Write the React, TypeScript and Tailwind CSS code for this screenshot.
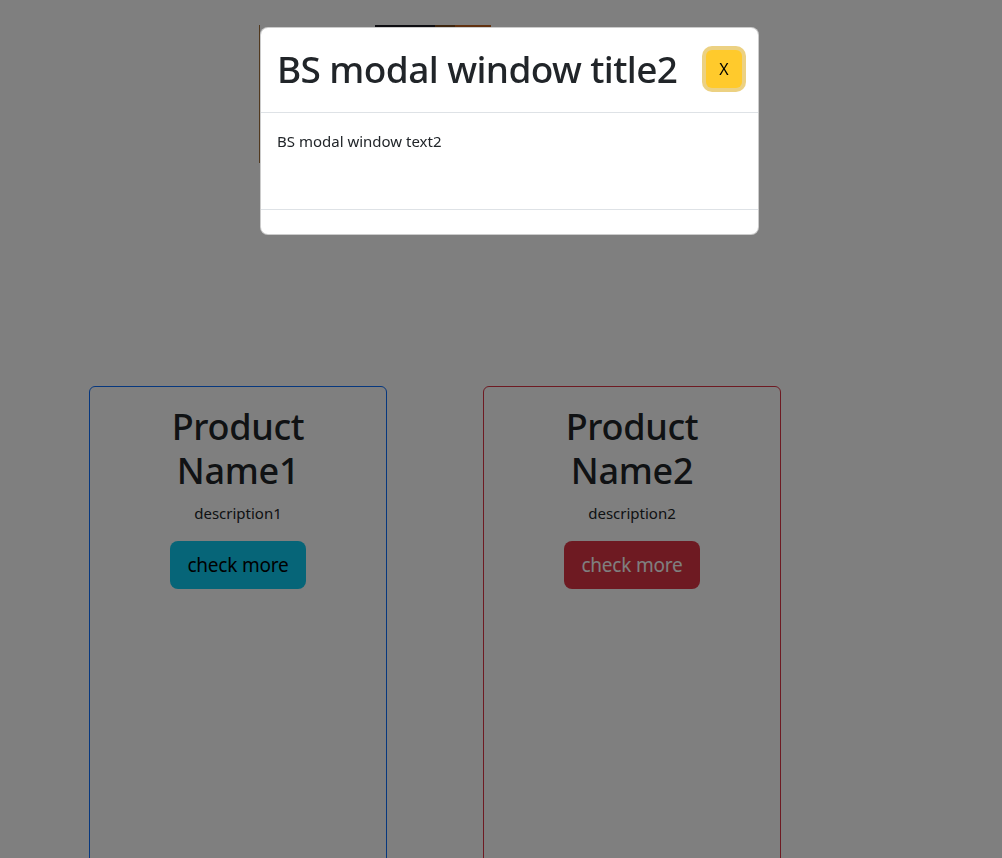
export default function App() {
  const font = { fontFamily: '"Noto Sans", "Open Sans", sans-serif' }
  return (
    <div className="relative min-h-[858px] bg-white text-[#212529]" style={font}>
      {/* page content behind the backdrop */}
      <div className="flex h-[386px] flex-col">
        <div className="ml-[259px] mt-[25px] flex h-[138px] w-[232px]">
          <div className="w-[116px] border-l border-[#a0703c] bg-white" />
          <div className="w-[60px] bg-[#1b1b22]" />
          <div className="w-[20px] bg-[#7a4a1c]" />
          <div className="flex-1 bg-[#c2621f]" />
        </div>
      </div>
      <div className="flex gap-[96px] pl-[89px]">
        <ProductCard name="Name1" description="description1" border="border-[#0d6efd]" button="bg-[#0dcaf0] text-black" />
        <ProductCard name="Name2" description="description2" border="border-[#dc3545]" button="bg-[#dc3545] text-white" />
      </div>

      {/* backdrop + modal */}
      <div className="fixed inset-0 bg-black/50">
        <div className="ml-[260px] mt-[27px] w-[499px] rounded-lg border border-black/20 bg-white">
          <div className="flex items-center justify-between border-b border-[#dee2e6] px-4 pt-[15px] pb-[17px]">
            <h1 className="text-[37px] leading-[52px] font-medium tracking-[-0.6px]">BS modal window title2</h1>
            <button className="h-[38px] w-[36px] rounded-md bg-[#ffca2c] text-base text-black shadow-[0_0_0_4px_rgba(217,164,6,0.5)]">
              X
            </button>
          </div>
          <div className="h-[96px] p-4">
            <p className="text-[15px] leading-6">BS modal window text2</p>
          </div>
          <div className="h-[25px] border-t border-[#dee2e6]" />
        </div>
      </div>
    </div>
  )
}

function ProductCard({ name, description, border, button }: { name: string; description: string; border: string; button: string }) {
  return (
    <div className={`h-[520px] w-[298px] rounded-md border ${border} p-4 text-center`}>
      <h1 className="mb-2 pt-[2px] text-[36px] leading-[44px] font-medium tracking-[-0.3px]">
        Product
        <br />
        {name}
      </h1>
      <p className="mb-4 text-[15px] leading-6">{description}</p>
      <button className={`rounded-lg border border-transparent px-4 py-2 text-[19px] leading-[30px] tracking-[-0.2px] ${button}`}>
        check more
      </button>
    </div>
  )
}
